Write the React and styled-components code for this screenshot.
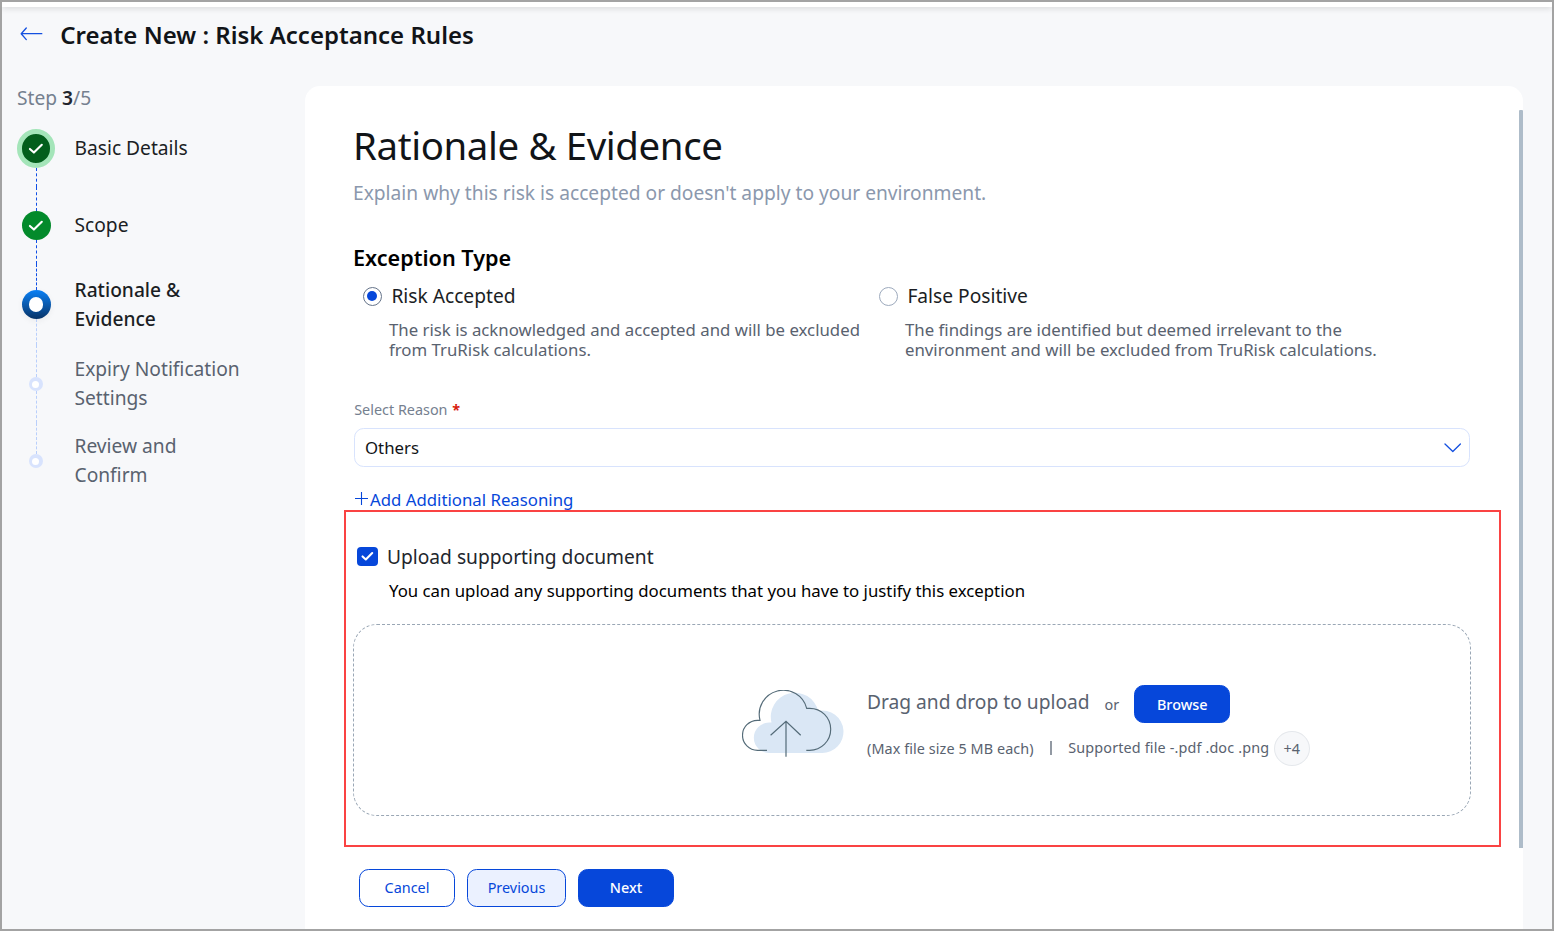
import React from "react";
import styled, { createGlobalStyle } from "styled-components";

const Global = createGlobalStyle`
  *, *::before, *::after { box-sizing: border-box; }
  body { margin: 0; font-family: "Noto Sans", sans-serif; color: #111418; }
  h1, h2, h3, p { margin: 0; }
  button { font-family: inherit; }
`;

const Frame = styled.div`
  width: 1554px;
  height: 931px;
  border: 2px solid #a3a3a3;
  background: #f7f8fa;
  display: flex;
  flex-direction: column;
  overflow: hidden;
  white-space: nowrap;
`;

const TopStrip = styled.div`
  height: 5px;
  flex: none;
  background: #fff;
  box-shadow: 0 1px 6px rgba(0, 0, 0, 0.16);
`;

const Header = styled.header`
  height: 79px;
  flex: none;
  display: flex;
  align-items: flex-start;
  padding: 12px 0 0 18px;
`;

const BackIcon = styled.svg`
  width: 24px;
  height: 16px;
  margin: 7px 16.3px 0 0;
`;

const PageTitle = styled.h1`
  font-size: 24px;
  line-height: 32px;
  font-weight: 600;
`;

const Body = styled.div`
  flex: 1;
  display: flex;
  min-height: 0;
`;

const Sidebar = styled.aside`
  width: 303px;
  flex: none;
`;

const StepCount = styled.div`
  padding-left: 15px;
  font-size: 19.2px;
  line-height: 24px;
  color: #75808f;
  b { font-weight: 600; color: #22262d; }
`;

const StepRow = styled.div`
  display: flex;
  align-items: center;
  height: ${(p) => p.$height}px;
`;

const Rail = styled.div`
  width: 69px;
  height: 100%;
  padding-right: 1px;
  margin-right: 3.5px;
  display: flex;
  flex-direction: column;
  align-items: center;
`;

const Line = styled.div`
  flex: 1;
  border-left: 1px dashed ${(p) => ({ done: "#0f4fe6", next: "#b9cffb", none: "transparent" }[p.$tone])};
`;

const DoneMarker = styled.div`
  width: ${(p) => (p.$ring ? 38.4 : 29)}px;
  height: ${(p) => (p.$ring ? 39 : 29)}px;
  border-radius: 50%;
  border: ${(p) => (p.$ring ? "5px solid #a4e5b9" : "0")};
  background: ${(p) => (p.$ring ? "#035e1c" : "#038a2b")};
  display: flex;
  align-items: center;
  justify-content: center;
`;

const CurrentMarker = styled.div`
  width: 29px;
  height: 29px;
  border-radius: 50%;
  background: linear-gradient(#0a80f5, #083468);
  display: flex;
  align-items: center;
  justify-content: center;
  box-shadow: 0 2px 6px rgba(0, 0, 0, 0.05);
  &::after {
    content: "";
    width: 14.4px;
    height: 14.4px;
    border-radius: 50%;
    background: #fff;
  }
`;

const PendingMarker = styled.div`
  width: 14.4px;
  height: 14.4px;
  border-radius: 50%;
  background: #d8e3fd;
  display: flex;
  align-items: center;
  justify-content: center;
  &::after {
    content: "";
    width: 7px;
    height: 7px;
    border-radius: 50%;
    background: #fff;
  }
`;

const StepLabel = styled.div`
  margin-bottom: 2px;
  font-size: 19.2px;
  line-height: 29px;
  white-space: pre-line;
  font-weight: ${(p) => (p.$state === "current" ? 500 : 400)};
  color: ${(p) => (p.$state === "pending" ? "#59626f" : "#1b1e24")};
`;

const Panel = styled.main`
  width: 1218px;
  background: #fff;
  border-radius: 15px 15px 0 0;
  padding-top: 24px;
`;

const ScrollArea = styled.div`
  height: 738px;
  display: flex;
  justify-content: space-between;
`;

const ScrollThumb = styled.div`
  width: 4px;
  border-radius: 1px 1px 0 0;
  background: #aebcc9;
`;

const Content = styled.div`
  width: 1157px;
  margin-left: 39px;
  padding-top: 11px;
`;

const Fields = styled.div`
  padding: 0 30px 0 9px;
`;

const Heading = styled.h2`
  font-size: 38.4px;
  line-height: 48px;
  font-weight: 400;
  letter-spacing: -0.38px;
`;

const Subtitle = styled.p`
  margin-top: 9px;
  font-size: 19.2px;
  line-height: 29px;
  color: #8b98ad;
`;

const SectionTitle = styled.h3`
  margin-top: 36px;
  font-size: 21.6px;
  line-height: 29px;
  font-weight: 600;
  color: #000;
`;

const Options = styled.div`
  margin-top: 9px;
  height: 80px;
  display: grid;
  grid-template-columns: 516px 1fr;
  padding-left: 9px;
`;

const OptionLabel = styled.label`
  display: flex;
  align-items: center;
  gap: 9px;
  padding-left: 0.6px;
  font-size: 19.2px;
  line-height: 29px;
  color: #1b1e24;
`;

const Radio = styled.span`
  width: 19px;
  height: 19px;
  margin: 1px 0.4px 0 0.4px;
  border-radius: 50%;
  border: 1px solid ${(p) => (p.$on ? "#66748a" : "#9daabd")};
  display: flex;
  align-items: center;
  justify-content: center;
  &::after {
    content: "";
    width: 10px;
    height: 10px;
    border-radius: 50%;
    background: ${(p) => (p.$on ? "#0647da" : "transparent")};
  }
`;

const OptionText = styled.p`
  margin: 10px 0 0 27px;
  font-size: 16.8px;
  line-height: 20px;
  white-space: pre-line;
  color: #59626f;
`;

const FieldLabel = styled.label`
  display: block;
  margin: 39px 0 0 1.2px;
  font-size: 14.4px;
  line-height: 20px;
  color: #75808f;
  b { color: #d8200d; font-weight: 700; margin-left: 1px; }
`;

const Select = styled.div`
  margin: 8px 0 0 1px;
  width: 1116px;
  height: 39px;
  border: 1px solid #d8e3fd;
  border-radius: 9.6px;
  padding: 0 8px 0 10px;
  display: flex;
  align-items: center;
  justify-content: space-between;
  font-size: 16.8px;
`;

const AddLink = styled.a`
  display: flex;
  align-items: center;
  margin: 21px 0 0 2px;
  font-size: 16.8px;
  line-height: 24px;
  color: #0647da;
`;

const PlusIcon = styled.svg`
  width: 15px;
  height: 16px;
  margin-top: -2px;
`;

const UploadSection = styled.section`
  height: 337px;
  margin-top: -2px;
  border: 2px solid #fa4343;
  padding: 30px 28px 0 7px;
`;

const CheckRow = styled.label`
  display: flex;
  align-items: center;
  gap: 9.2px;
  padding-left: 4.4px;
  font-size: 19.2px;
  line-height: 29px;
  color: #22262d;
`;

const Checkbox = styled.span`
  width: 20.4px;
  height: 19px;
  border-radius: 4px;
  background: #0647da;
  display: flex;
  align-items: center;
  justify-content: center;
`;

const CheckHint = styled.p`
  margin: 8px 0 0 36px;
  font-size: 16.8px;
  line-height: 24px;
  color: #000;
`;

const DropZone = styled.div`
  margin-top: 21px;
  width: 1118px;
  height: 192px;
  border: 1px dashed #9aa7b5;
  border-radius: 24px;
  padding: 60px 0 0 388px;
  display: flex;
  align-items: flex-start;
`;

const CloudIcon = styled.svg`
  width: 103px;
  height: 68px;
  margin: 5px 22px 0 0;
`;

const DropRow = styled.div`
  display: flex;
  align-items: center;
  height: 38px;
  font-size: 14.4px;
  color: #59626f;
`;

const DropTitle = styled.span`
  font-size: 19.2px;
  line-height: 28px;
  margin: -4px 15px 0 0;
`;

const DropMeta = styled(DropRow)`
  margin-top: 6px;
  height: 37px;
`;

const FileLimit = styled.span`
  margin-top: 2px;
  letter-spacing: 0.08px;
`;

const Divider = styled.span`
  width: 2px;
  height: 14px;
  margin: 1px 16.6px 0 16px;
  background: #9299a3;
`;

const Formats = styled.span`
  letter-spacing: 0.14px;
`;

const MoreBadge = styled.span`
  width: 36px;
  height: 35px;
  margin: 1px 0 0 4.6px;
  border: 1px solid #e5e8ec;
  border-radius: 50%;
  background: #f7f8fa;
  display: flex;
  align-items: center;
  justify-content: center;
`;

const Button = styled.button`
  width: ${(p) => p.$width || 96}px;
  height: 38px;
  padding: 0;
  border: 1px solid #0647da;
  border-radius: 9.6px;
  font-size: 14.4px;
  font-weight: ${(p) => (p.$kind === "primary" ? 500 : 400)};
  color: ${(p) => (p.$kind === "primary" ? "#fff" : "#0647da")};
  background: ${(p) => ({ primary: "#0647da", tinted: "#ebf1ff" }[p.$kind] || "#fff")};
`;

const OrText = styled.span`
  margin: 1px 15px 0 0;
`;

const Footer = styled.footer`
  display: flex;
  gap: 12px;
  padding: 21px 0 0 54px;
  ${Button} { padding-bottom: 2px; }
`;

const Tick = ({ size = 16, weight = 2.1 }) => (
  <svg width={size} height={size} viewBox="0 0 16 16" fill="none" stroke="#fff" strokeWidth={weight} strokeLinecap="round" strokeLinejoin="round">
    <path d="M1.9 7.9L5.9 11.6L13.8 3.8" />
  </svg>
);

const steps = [
  { label: "Basic Details", state: "first", height: 77, above: "none", below: "done" },
  { label: "Scope", state: "done", height: 77, above: "done", below: "done" },
  { label: "Rationale &\nEvidence", state: "current", height: 81, above: "done", below: "next" },
  { label: "Expiry Notification\nSettings", state: "pending", height: 78, above: "next", below: "next" },
  { label: "Review and\nConfirm", state: "pending", height: 76, above: "next", below: "none" },
];

const options = [
  { label: "Risk Accepted", on: true, text: "The risk is acknowledged and accepted and will be excluded\nfrom TruRisk calculations." },
  { label: "False Positive", on: false, text: "The findings are identified but deemed irrelevant to the\nenvironment and will be excluded from TruRisk calculations." },
];

function Marker({ state }) {
  if (state === "current") return <CurrentMarker />;
  if (state === "pending") return <PendingMarker />;
  return (
    <DoneMarker $ring={state === "first"}>
      <Tick />
    </DoneMarker>
  );
}

export default function App() {
  return (
    <Frame>
      <Global />
      <TopStrip />
      <Header>
        <BackIcon viewBox="0 0 24 16" fill="none" stroke="#1450e0" strokeWidth="1.3" strokeLinecap="round" strokeLinejoin="round">
          <path d="M21.8 7.7H1.3M6.3 2L1.2 7.7L6.3 13.6" />
        </BackIcon>
        <PageTitle>Create New : Risk Acceptance Rules</PageTitle>
      </Header>
      <Body>
        <Sidebar>
          <StepCount>Step <b>3</b>/5</StepCount>
          {steps.map((s) => (
            <StepRow key={s.label} $height={s.height}>
              <Rail>
                <Line $tone={s.above} />
                <Marker state={s.state} />
                <Line $tone={s.below} />
              </Rail>
              <StepLabel $state={s.state}>{s.label}</StepLabel>
            </StepRow>
          ))}
        </Sidebar>
        <Panel>
          <ScrollArea>
            <Content>
              <Fields>
                <Heading>Rationale &amp; Evidence</Heading>
                <Subtitle>Explain why this risk is accepted or doesn't apply to your environment.</Subtitle>
                <SectionTitle>Exception Type</SectionTitle>
                <Options>
                  {options.map((o) => (
                    <div key={o.label}>
                      <OptionLabel><Radio $on={o.on} />{o.label}</OptionLabel>
                      <OptionText>{o.text}</OptionText>
                    </div>
                  ))}
                </Options>
                <FieldLabel>Select Reason <b>*</b></FieldLabel>
                <Select>
                  Others
                  <svg width="17" height="12" viewBox="0 0 17 12" fill="none" stroke="#1450e0" strokeWidth="1.3" strokeLinecap="round" strokeLinejoin="round">
                    <path d="M1 2L8.8 9.5L16.4 2" />
                  </svg>
                </Select>
                <AddLink>
                  <PlusIcon viewBox="0 0 15 16" fill="none" stroke="#0647da" strokeWidth="1.1">
                    <path d="M0 7.5H13M6.5 1V14" />
                  </PlusIcon>
                  Add Additional Reasoning
                </AddLink>
              </Fields>
              <UploadSection>
                <CheckRow>
                  <Checkbox><Tick size={13} weight={2.6} /></Checkbox>
                  Upload supporting document
                </CheckRow>
                <CheckHint>You can upload any supporting documents that you have to justify this exception</CheckHint>
                <DropZone>
                  <CloudIcon viewBox="0 0 103 68" fill="none">
                    <g transform="translate(0 0.6)">
                      <path d="M27 62.3A15.15 15.15 0 0 1 27 32H29.5A24 24 0 1 1 76.2 20.3A21.2 21.2 0 1 1 79.8 62.3Z" fill="#dae7f5" />
                      <path d="M25 59.7H15.5A15 15 0 0 1 15.5 29.7H18A24 24 0 1 1 64.7 17.7H67.7A21 21 0 0 1 67.7 59.7H64.3" stroke="#546b78" strokeWidth="1.15" />
                    </g>
                    <path d="M44 66.7V31.3M28.6 45.3L44 31.3L58.7 45.3" stroke="#546b78" strokeWidth="1.2" />
                  </CloudIcon>
                  <div>
                    <DropRow>
                      <DropTitle>Drag and drop to upload</DropTitle>
                      <OrText>or</OrText>
                      <Button $kind="primary">Browse</Button>
                    </DropRow>
                    <DropMeta>
                      <FileLimit>(Max file size 5 MB each)</FileLimit>
                      <Divider />
                      <Formats>Supported file -.pdf .doc .png</Formats>
                      <MoreBadge>+4</MoreBadge>
                    </DropMeta>
                  </div>
                </DropZone>
              </UploadSection>
            </Content>
            <ScrollThumb />
          </ScrollArea>
          <Footer>
            <Button>Cancel</Button>
            <Button $kind="tinted" $width={99}>Previous</Button>
            <Button $kind="primary">Next</Button>
          </Footer>
        </Panel>
      </Body>
    </Frame>
  );
}
